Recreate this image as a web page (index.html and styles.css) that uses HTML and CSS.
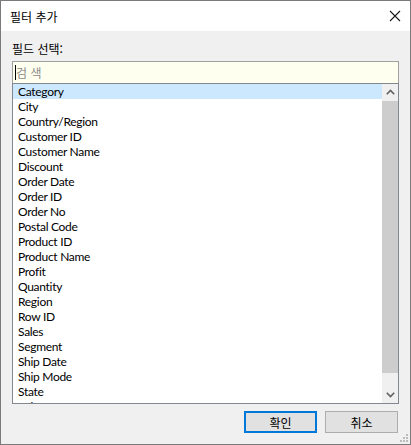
FILE: index.html
```html
<!DOCTYPE html>
<html lang="ko">
<head>
<meta charset="utf-8">
<title>필터 추가</title>
<link rel="stylesheet" href="styles.css">
</head>
<body>
<div class="window">
  <div class="titlebar">
    <span class="title">필터 추가</span>
    <svg class="close" width="12" height="12" viewBox="0 0 12 12"><path d="M1 1 L11 11 M11 1 L1 11" stroke="#1a1a1a" stroke-width="1.1" fill="none"/></svg>
  </div>
  <div class="content">
    <div class="label">필드 선택:</div>
    <div class="search"><span class="caret"></span><span class="placeholder">검 색</span></div>
    <div class="listbox">
      <ul class="items">
        <li class="selected">Category</li>
        <li>City</li>
        <li>Country/Region</li>
        <li>Customer ID</li>
        <li>Customer Name</li>
        <li>Discount</li>
        <li>Order Date</li>
        <li>Order ID</li>
        <li>Order No</li>
        <li>Postal Code</li>
        <li>Product ID</li>
        <li>Product Name</li>
        <li>Profit</li>
        <li>Quantity</li>
        <li>Region</li>
        <li>Row ID</li>
        <li>Sales</li>
        <li>Segment</li>
        <li>Ship Date</li>
        <li>Ship Mode</li>
        <li>State</li>
        <li>Sub-Category</li>
      </ul>
      <div class="scrollbar">
        <div class="arrow"><svg width="9" height="6" viewBox="0 0 9 6"><path d="M0.8 5.2 L4.5 1.5 L8.2 5.2" stroke="#606060" stroke-width="1.6" fill="none"/></svg></div>
        <div class="track"><div class="thumb"></div></div>
        <div class="arrow"><svg width="9" height="6" viewBox="0 0 9 6"><path d="M0.8 0.8 L4.5 4.5 L8.2 0.8" stroke="#606060" stroke-width="1.6" fill="none"/></svg></div>
      </div>
    </div>
    <div class="buttons">
      <button class="btn default">확인</button>
      <button class="btn">취소</button>
    </div>
  </div>
  <div class="grip">
    <svg width="8" height="8" viewBox="0 0 8 8"><g fill="#bcbcbc"><rect x="6" y="0" width="2" height="2"/><rect x="3" y="3" width="2" height="2"/><rect x="6" y="3" width="2" height="2"/><rect x="0" y="6" width="2" height="2"/><rect x="3" y="6" width="2" height="2"/><rect x="6" y="6" width="2" height="2"/></g></svg>
  </div>
</div>
</body>
</html>
```
FILE: styles.css
```css
* { box-sizing: border-box; }
html, body { margin: 0; padding: 0; }
body {
  width: 411px;
  height: 445px;
  overflow: hidden;
  font-family: Lato, "Noto Sans CJK KR", sans-serif;
  font-size: 12px;
  color: #000;
  background: #f0f0f0;
}
.window {
  position: relative;
  width: 411px;
  height: 445px;
  border: 1px solid #7a7a7a;
  background: #f0f0f0;
  display: flex;
  flex-direction: column;
}
.titlebar {
  height: 30px;
  background: #fff;
  display: flex;
  align-items: center;
  justify-content: space-between;
  padding: 0 9px 0 9px;
  flex: none;
}
.title {
  font-family: "Noto Sans CJK KR", sans-serif;
  font-size: 12px;
  color: #000;
}
.content {
  flex: 1;
  padding: 10px 12px 0 11px;
  display: flex;
  flex-direction: column;
}
.label {
  font-family: "Noto Sans CJK KR", sans-serif;
  font-size: 12px;
  height: 20px;
  line-height: 16px;
}
.search {
  height: 23px;
  width: 387px;
  border: 1px solid #a0a0a0;
  background: #fffff0;
  display: flex;
  align-items: center;
  padding-left: 2px;
}
.caret {
  width: 1px;
  height: 15px;
  background: #000;
}
.placeholder {
  font-family: "Noto Sans CJK KR", sans-serif;
  color: #8c8c8c;
  font-size: 12px;
}
.listbox {
  width: 387px;
  height: 321px;
  margin-top: -1px;
  border: 1px solid #828790;
  background: #fff;
  display: flex;
}
.items {
  list-style: none;
  margin: 0;
  padding: 0;
  flex: 1;
  overflow: hidden;
}
.items li {
  height: 15px;
  line-height: 15px;
  padding-left: 5px;
  white-space: nowrap;
  letter-spacing: -0.3px;
}
.items li.selected { background: #cce8ff; }
.scrollbar {
  width: 16px;
  background: #f0f0f0;
  display: flex;
  flex-direction: column;
}
.arrow {
  height: 16px;
  display: flex;
  align-items: center;
  justify-content: center;
  flex: none;
}
.track {
  flex: 1;
  padding: 1px 0 14px 0;
}
.thumb {
  height: 100%;
  background: #cdcdcd;
}
.buttons {
  display: flex;
  justify-content: flex-end;
  gap: 8px;
  margin-top: 7px;
}
.btn {
  width: 73px;
  height: 22px;
  border: 1px solid #adadad;
  background: #e1e1e1;
  font-family: "Noto Sans CJK KR", sans-serif;
  font-size: 12px;
  color: #000;
  padding: 0;
  margin: 0;
}
.btn.default {
  border: 2px solid #0078d7;
}
.grip {
  position: absolute;
  right: 2px;
  bottom: 2px;
  width: 8px;
  height: 8px;
  display: flex;
}
```
